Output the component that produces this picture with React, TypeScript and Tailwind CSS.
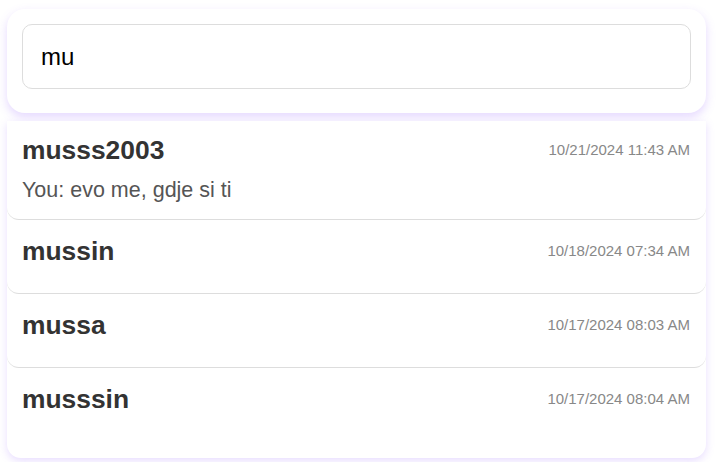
import React from "react";

const chats = [
  { name: "musss2003", time: "10/21/2024 11:43 AM", msg: "You: evo me, gdje si ti" },
  { name: "mussin", time: "10/18/2024 07:34 AM" },
  { name: "mussa", time: "10/17/2024 08:03 AM" },
  { name: "musssin", time: "10/17/2024 08:04 AM" },
];

export default function App() {
  return (
    <div
      className="w-[718px] h-[462px] bg-white overflow-hidden pl-[7px] pr-[12px] pt-[9px]"
      style={{ fontFamily: '"Liberation Sans", Arial, sans-serif' }}
    >
      <div className="rounded-[18px] bg-white px-[15px] pt-[15px] pb-[24px] shadow-[0_4px_10px_rgba(150,100,255,0.25)]">
        <div className="h-[65px] rounded-[10px] border border-[#dddddd] flex items-center pl-[18px] text-[24px] text-black">
          mu
        </div>
      </div>
      <div className="mt-[8px] h-[337px] rounded-b-[14px] bg-white shadow-[0_3px_8px_rgba(150,100,255,0.22)] flex flex-col overflow-hidden">
        {chats.map((c, i) => (
          <div
            key={c.name}
            className={
              i === 0
                ? "h-[99px] shrink-0 rounded-b-[12px] border-b border-[#dddddd] px-[15px] pt-[14px]"
                : i === chats.length - 1
                ? "h-[90px] shrink-0 px-[15px] pt-[16px]"
                : "h-[74px] shrink-0 rounded-[12px] border-b border-[#dddddd] px-[15px] pt-[16px]"
            }
          >
            <div className="flex items-center justify-between h-[30px]">
              <span className="text-[26.4px] font-bold text-[#333333] leading-[30px]">{c.name}</span>
              <span className="text-[15px] text-[#888888] pr-px">{c.time}</span>
            </div>
            {c.msg && (
              <div className="mt-[13px] text-[21.5px] leading-[24px] text-[#555555]">{c.msg}</div>
            )}
          </div>
        ))}
      </div>
    </div>
  );
}
